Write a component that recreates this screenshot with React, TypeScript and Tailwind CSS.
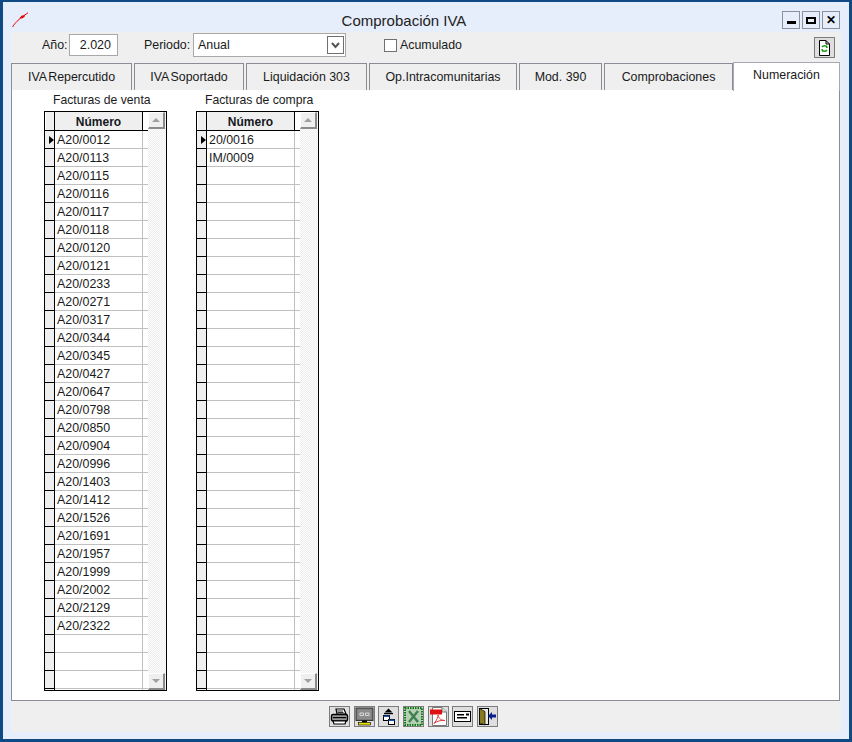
import React from "react";

const venta = ["A20/0012","A20/0113","A20/0115","A20/0116","A20/0117","A20/0118","A20/0120","A20/0121","A20/0233","A20/0271","A20/0317","A20/0344","A20/0345","A20/0427","A20/0647","A20/0798","A20/0850","A20/0904","A20/0996","A20/1403","A20/1412","A20/1526","A20/1691","A20/1957","A20/1999","A20/2002","A20/2129","A20/2322"];
const compra = ["20/0016","IM/0009"];
const ROWS = 32;

function Tab({ label, w, cls = "mr-[2px]" }: { label: React.ReactNode; w: string; cls?: string }) {
  return (
    <div className={`${w} ${cls} h-[27px] flex items-center justify-center bg-[#efefef] border border-b-0 border-[#8c8c94] text-[12.4px] text-[#1a1a1a] pt-[1px]`}>
      {label}
    </div>
  );
}

function Grid({ title, rows }: { title: string; rows: string[] }) {
  const list = Array.from({ length: ROWS }, (_, i) => rows[i] ?? "");
  return (
    <div className="w-[123px] flex flex-col">
      <div className="h-[21px] pl-[9px] text-[12.2px] leading-[21px] text-[#1a1a1a] whitespace-nowrap">{title}</div>
      <div className="h-[580px] w-[123px] border border-black flex overflow-hidden bg-white">
        <div className="w-[103px] flex flex-col shrink-0 overflow-hidden">
          <div className="h-[19px] shrink-0 flex border-b border-black">
            <div className="w-[10px] shrink-0 bg-[#efefef] border-l border-l-white border-r border-r-black" />
            <div className="w-[88px] shrink-0 bg-[#efefef] text-center font-bold text-[12px] leading-[20px] text-[#14181e] border-r border-black">Número</div>
          </div>
          {list.map((v, i) => (
            <div key={i} className="h-[18px] shrink-0 flex">
              <div className="w-[10px] shrink-0 bg-[#efefef] border-r border-b border-black flex items-center">
                {i === 0 && <div className="ml-[4px] w-0 h-0 border-y-[4px] border-y-transparent border-l-[5px] border-l-black" />}
              </div>
              <div className="w-[88px] shrink-0 border-r border-b border-[#c0c0c0] text-[12.4px] leading-[18px] pl-[2px] text-[#1a1a1a]">{v}</div>
              <div className="flex-1 border-b border-[#c0c0c0]" />
            </div>
          ))}
        </div>
        <div className="w-[18px] pr-[1px] flex flex-col justify-between bg-[repeating-conic-gradient(#ececec_0_25%,#ffffff_0_50%)] bg-[length:2px_2px]">
          <ScrollBtn dir="up" />
          <ScrollBtn dir="down" />
        </div>
      </div>
    </div>
  );
}

function ScrollBtn({ dir }: { dir: "up" | "down" }) {
  return (
    <div className="h-[17px] w-[17px] bg-[#efefef] border border-white border-r-2 border-b-2 border-r-[#8a8a8a] border-b-[#8a8a8a] flex items-center justify-center">
      {dir === "up" ? (
        <div className="w-0 h-0 border-x-[4px] border-x-transparent border-b-[4px] border-b-[#a0a0a0]" />
      ) : (
        <div className="w-0 h-0 border-x-[4px] border-x-transparent border-t-[4px] border-t-[#a0a0a0]" />
      )}
    </div>
  );
}

function WinBtn({ children }: { children: React.ReactNode }) {
  return (
    <div className="w-[18px] h-[18px] border border-[#8c8f9e] bg-[#e6edfb] flex items-center justify-center">{children}</div>
  );
}

function ToolBtn({ children }: { children: React.ReactNode }) {
  return (
    <div className="w-[21px] h-[21px] bg-[#dedede] border border-[#7c7c7c] flex items-center justify-center">
      <svg width="19" height="19" viewBox="0 0 19 19" className="shrink-0">{children}</svg>
    </div>
  );
}

export default function App() {
  return (
    <div className="w-[852px] h-[742px] border-[3px] border-t-2 border-[#0f4a85] bg-[#e6edfb] flex flex-col overflow-hidden font-['Liberation_Sans',Arial,sans-serif]">
      {/* title bar */}
      <div className="h-[30px] shrink-0 flex items-start pl-[9px] pr-[9px]">
        <svg width="17" height="16" viewBox="0 0 17 16" className="mt-[10px] shrink-0">
          <path d="M.5 15 C2 12.5 4 10 7 7.5 L10 5" stroke="#e80000" strokeWidth="1" fill="none" />
          <path d="M7.5 6 L10 3.5 L13 3 L12.5 5 L10 6.5 Z" fill="#e80000" />
          <path d="M12 3.5 L16 .8" stroke="#e80000" strokeWidth="1" />
        </svg>
        <div className="flex-1 mt-[10px] text-center text-[15px] leading-[18px] text-[#222] pr-[3px]">Comprobación IVA</div>
        <div className="flex gap-[2px] mt-[9px]">
          <WinBtn><div className="w-[9px] h-[3px] bg-black mt-[4px]" /></WinBtn>
          <WinBtn><div className="w-[10px] h-[7px] border-2 border-black" /></WinBtn>
          <WinBtn><span className="text-[12px] leading-none font-bold text-black">✕</span></WinBtn>
        </div>
      </div>
      {/* main gray */}
      <div className="flex-1 mx-[8px] mb-[7px] bg-[#efefef] flex flex-col">
        <div className="h-[31px] pb-[5px] shrink-0 flex items-center text-[12.4px] text-[#1a1a1a]">
          <span className="ml-[31px] w-[27px] pt-[1px]">Año:</span>
          <div className="w-[49px] h-[22px] bg-white border border-[#a8a8a8] text-right pr-[6px] leading-[21px] text-[12.5px]">2.020</div>
          <span className="ml-[26px] w-[49px] pt-[1px]">Periodo:</span>
          <div className="w-[153px] h-[24px] bg-white border border-[#a8a8a8] flex items-center pl-[4px]">
            <span className="flex-1 pt-[1px]">Anual</span>
            <div className="w-[17px] h-[18px] mr-[1px] border border-[#6f6f6f] flex items-center justify-center">
              <svg width="9" height="7" viewBox="0 0 9 7"><path d="M1 1 L4.5 5 L8 1" stroke="#555" strokeWidth="2" fill="none" /></svg>
            </div>
          </div>
          <div className="ml-[38px] w-[13px] h-[13px] bg-white border border-[#707070] mr-[3px]" />
          <span>Acumulado</span>
          <div className="ml-auto mr-[6px] mt-[5px] w-[21px] h-[21px] bg-[#dedede] border border-[#7c7c7c] flex items-center justify-center">
            <svg width="13" height="16" viewBox="0 0 13 16">
              <path d="M1.5 .5 H8 L11.5 4 V15.5 H1.5 Z M8 .5 V4 H11.5" fill="#fff" stroke="#000" />
              <path d="M4 7 A3 3 0 0 1 9 7 M9 10 A3 3 0 0 1 4 10" fill="none" stroke="#14a014" strokeWidth="1.5" />
              <path d="M8 5 V8 H10 Z M5 12 V9 H3 Z" fill="#14a014" />
            </svg>
          </div>
        </div>
        {/* tabs */}
        <div className="flex items-end h-[27px] shrink-0 relative z-10">
          <Tab w="w-[121px]" label={<span className="[word-spacing:-1.5px]">IVA Repercutido</span>} />
          <Tab w="w-[110px]" label={<span className="[word-spacing:-1.5px]">IVA Soportado</span>} />
          <Tab w="w-[121px]" label="Liquidación 303" />
          <Tab w="w-[148px]" label="Op.Intracomunitarias" />
          <Tab w="w-[83px]" label="Mod. 390" />
          <Tab w="w-[129px]" cls="border-b border-b-[#cfe5f5]" label="Comprobaciones" />
          <div className="w-[107px] h-[29px] -mb-[1px] -mt-[2px] bg-white border border-b-0 border-[#a8a8b0] flex items-start justify-center text-[12.4px] text-[#1a1a1a] pt-[3px]">Numeración</div>
        </div>
        {/* panel */}
        <div className="h-[611px] w-[829px] shrink-0 bg-white border border-t-0 border-[#8c8c94] flex gap-[29px] pl-[32px]">
          <Grid title="Facturas de venta" rows={venta} />
          <Grid title="Facturas de compra" rows={compra} />
        </div>
        {/* toolbar */}
        <div className="flex-1 flex items-center justify-center gap-[3.67px] pr-[25px]">
          <ToolBtn>
            <path d="M6 2 H14 L16 7 H7 Z" fill="#fff" stroke="#000" strokeWidth="1.2" />
            <path d="M7 4 H13 M7.5 5.5 H13.5" stroke="#000" strokeWidth=".8" />
            <rect x="1.5" y="7.5" width="16" height="6.5" rx="1.5" fill="#9a9a9a" stroke="#000" strokeWidth="1.4" />
            <rect x="3" y="10" width="13" height="1.2" fill="#000" />
            <path d="M3 14 L4 17 H15 L16 14 Z" fill="#fff" stroke="#000" strokeWidth="1.2" />
          </ToolBtn>
          <ToolBtn>
            <rect x="1" y="1" width="17" height="12.5" fill="#7a7a7a" stroke="#333" />
            <rect x="2.5" y="2.5" width="14" height="9.5" fill="#8c8c8c" />
            <path d="M5 6 h3.5 v2.5 h-3.5 Z M10.5 6 h3.5 v2.5 h-3.5 Z" fill="none" stroke="#d8d8d8" />
            <rect x="7" y="13.5" width="5" height="2" fill="#000" />
            <rect x="3.5" y="15.5" width="12" height="2.5" fill="#e8e000" stroke="#000" strokeWidth=".6" />
          </ToolBtn>
          <ToolBtn>
            <path d="M9.5 1.5 L13.5 5.5 H5.5 Z" fill="#000" />
            <rect x="5" y="6" width="9" height="1.2" fill="#000" />
            <rect x="4.5" y="8.5" width="6" height="5" fill="#fff" stroke="#000" />
            <rect x="4.5" y="8.5" width="6" height="1.5" fill="#1c4fa8" />
            <rect x="9.5" y="12.5" width="6" height="5" fill="#fff" stroke="#000" />
            <rect x="9.5" y="12.5" width="6" height="1.5" fill="#1c4fa8" />
          </ToolBtn>
          <ToolBtn>
            <rect x="1" y="1" width="17" height="17" fill="#b4d0b4" stroke="#0f7a0f" strokeWidth="2" strokeDasharray="1.5 1" />
            <path d="M5 4 L14 15 M14 4 L5 15" stroke="#3f7f4f" strokeWidth="2.4" />
          </ToolBtn>
          <ToolBtn>
            <path d="M3.5 .5 H13 L17.5 5 V18.5 H3.5 Z" fill="#fff" stroke="#777" />
            <path d="M13 .5 V5 H17.5" fill="#ddd" stroke="#777" />
            <rect x="1" y="2.5" width="12" height="5" fill="#e01010" />
            <path d="M5 16.5 C8 13 9 10 9 8 C10 12 12 13 16 13.5 C12 13 8 14 5 16.5 Z" fill="none" stroke="#e04040" />
          </ToolBtn>
          <ToolBtn>
            <rect x="1.5" y="4.5" width="16" height="10" fill="#fff" stroke="#000" />
            <rect x="4" y="7" width="7" height="1.5" fill="#000" />
            <rect x="4" y="10" width="10" height="1.5" fill="#000" />
            <rect x="13" y="6.5" width="3" height="2" fill="#000" />
          </ToolBtn>
          <ToolBtn>
            <rect x="1.5" y="1.5" width="9" height="16" fill="#ececec" stroke="#000" />
            <path d="M1.5 1.5 L7 4.5 V18 L1.5 16 Z" fill="#8a7a1f" stroke="#000" strokeWidth=".7" />
            <path d="M10 9 L14 5 V7.5 H18 V10.5 H14 V13 Z" fill="#0a1f8f" />
          </ToolBtn>
        </div>
      </div>
    </div>
  );
}
